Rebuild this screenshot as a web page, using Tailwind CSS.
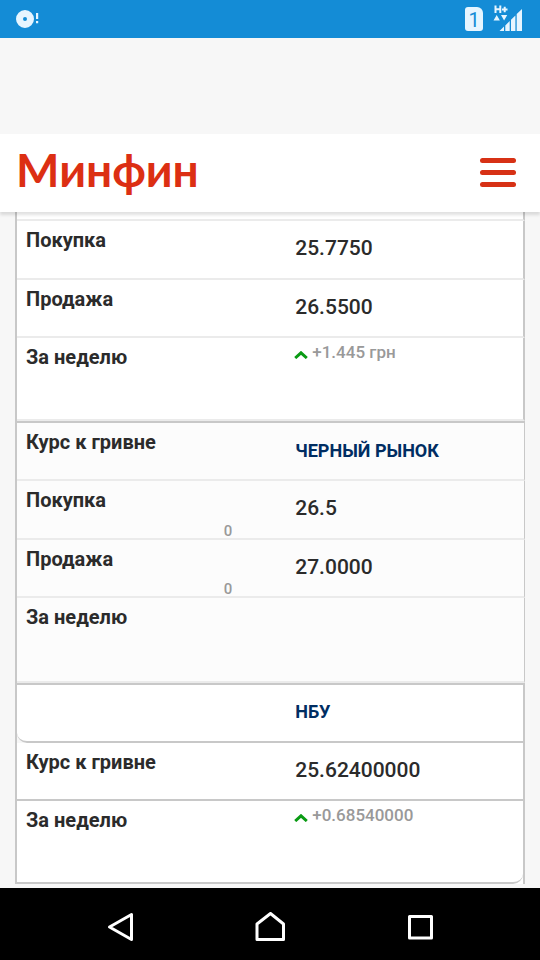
<!DOCTYPE html>
<html lang="ru">

<head>
    <meta charset="UTF-8">
    <meta name="viewport" content="width=device-width, initial-scale=1.0">
    <title>Минфин</title>
    <script src="https://cdn.jsdelivr.net/npm/@tailwindcss/browser@4"></script>
</head>

<body class="flex min-h-screen flex-col bg-[#f7f7f7] font-[Roboto,sans-serif] text-[#2b2b2b]">

    <!-- Status bar -->
    <div class="flex h-[38px] items-center justify-between bg-[#148cd6] px-4">
        <svg class="h-5 w-6" viewBox="0 0 24 20" fill="#e6f5ff" aria-hidden="true">
            <path fill-rule="evenodd" d="M9 1a9 9 0 1 0 0 18A9 9 0 0 0 9 1Zm0 7a2 2 0 1 1 0 4a2 2 0 0 1 0-4Z" />
            <path d="M20 4h2.200v6h-2.200zM20 12h2.200v2.200h-2.200z" />
        </svg>
        <div class="flex items-center gap-[9px]">
            <div class="flex h-6 w-[18px] items-center justify-center rounded-[3px] rounded-tr-md bg-[#e6f5ff] pt-[2px] text-xl leading-6 text-[#148cd6]">1</div>
            <svg class="h-7 w-8" viewBox="0 0 32 28" fill="#e6f5ff" aria-hidden="true">
                <path d="M3.500 .5v7.500M8.300 .5v7.500M3.500 4.200h4.800M10 4.500h5.500M12.700 1.800v5.500" stroke="#e6f5ff" stroke-width="2" fill="none" />
                <path d="M1.500 15.500 4.700 10 7.900 15.500ZM9 10h6.200L12.100 15.500Z" />
                <path d="M7.500 26 12 21.500V26ZM13.300 20.500l4.400-4.400V26h-4.400ZM19 14.800l4.400-4.400V26H19ZM24.700 9 30 4v22h-5.300Z" />
            </svg>
        </div>
    </div>

    <!-- Header -->
    <header class="relative z-10 mt-24 flex h-[78px] items-center justify-between bg-white pr-6 pb-[2px] pl-4 shadow-[0_3px_3px_rgba(0,0,0,0.12)]">
        <a href="#" class="pb-1 font-[Lato,'Open_Sans',sans-serif] text-[46px] leading-[52px] font-bold text-[#dc2f13]">Минфин</a>
        <button type="button" aria-label="Меню" class="flex flex-col gap-[7px]">
            <span class="h-[5px] w-9 rounded-full bg-[#d73115]"></span>
            <span class="h-[5px] w-9 rounded-full bg-[#d73115]"></span>
            <span class="h-[5px] w-9 rounded-full bg-[#d73115]"></span>
        </button>
    </header>

    <!-- Rates -->
    <main class="flex-1 px-[15px] pb-1">
        <table class="w-full table-fixed border-separate border-spacing-0 border-l-2 border-[#c8c8c8] text-left">
            <colgroup>
                <col class="w-[53%]">
                <col>
            </colgroup>
            <tbody class="bg-white">
                <tr class="h-[9px]">
                    <td class="border-b-2 border-[#ebebeb] p-0"></td>
                    <td class="border-r-2 border-b-2 border-r-[#c8c8c8] border-b-[#ebebeb] p-0"></td>
                </tr>
                <tr class="h-[59px] align-top">
                    <th class="border-b-2 border-[#ebebeb] px-[9px] pt-[7px] text-xl leading-6 font-bold">Покупка</th>
                    <td class="border-r-2 border-b-2 border-r-[#c8c8c8] border-b-[#ebebeb] px-[9px] pt-[15px] text-[21px] leading-6 font-medium">25.7750</td>
                </tr>
                <tr class="h-[58px] align-top">
                    <th class="border-b-2 border-[#ebebeb] px-[9px] pt-[7px] text-xl leading-6 font-bold">Продажа</th>
                    <td class="border-r-2 border-b-2 border-r-[#c8c8c8] border-b-[#ebebeb] px-[9px] pt-[15px] text-[21px] leading-6 font-medium">26.5500</td>
                </tr>
                <tr class="h-[83px] align-top">
                    <th class="border-b-2 border-[#ebebeb] px-[9px] pt-[7px] text-xl leading-6 font-bold">За неделю</th>
                    <td class="border-r-2 border-b-2 border-r-[#c8c8c8] border-b-[#ebebeb] px-2 pt-[2px] text-[17px] leading-6 font-medium text-[#999]">
                        <div class="flex items-start gap-1">
                            <svg class="mt-[11px] h-2 w-[14px]" viewBox="0 0 14 8" fill="none" stroke="#0a9b14" stroke-width="3" aria-hidden="true">
                                <path d="M1.200 7 7 1.800 12.800 7" />
                            </svg>
                            +1.445 грн
                        </div>
                    </td>
                </tr>
            </tbody>
            <tbody class="bg-[#fcfcfc]">
                <tr class="h-[60px] align-top">
                    <th class="border-t-2 border-b-2 border-t-[#c8c8c8] border-b-[#ebebeb] px-[9px] pt-[7px] text-xl leading-6 font-bold">Курс к гривне</th>
                    <td class="border-t-2 border-r border-b-2 border-[#c8c8c8] border-b-[#ebebeb] px-[9px] pt-4 text-lg leading-6 font-bold"><a href="#" class="text-[#002d62]">ЧЕРНЫЙ РЫНОК</a></td>
                </tr>
                <tr class="h-[59px] align-top">
                    <th class="border-b-2 border-[#ebebeb] px-[9px] pt-[7px] text-xl leading-6 font-bold">
                        Покупка
                        <div class="mt-3 pr-[45px] text-right text-[15px] leading-[14px] font-medium text-[#999]">0</div>
                    </th>
                    <td class="border-r border-b-2 border-r-[#c8c8c8] border-b-[#ebebeb] px-[9px] pt-[15px] text-[21px] leading-6 font-medium">26.5</td>
                </tr>
                <tr class="h-[58px] align-top">
                    <th class="border-b-2 border-[#ebebeb] px-[9px] pt-[7px] text-xl leading-6 font-bold">
                        Продажа
                        <div class="mt-3 pr-[45px] text-right text-[15px] leading-[13px] font-medium text-[#999]">0</div>
                    </th>
                    <td class="border-r border-b-2 border-r-[#c8c8c8] border-b-[#ebebeb] px-[9px] pt-[15px] text-[21px] leading-6 font-medium">27.0000</td>
                </tr>
                <tr class="h-[85px] align-top">
                    <th class="border-b-2 border-[#ebebeb] px-[9px] pt-[7px] text-xl leading-6 font-bold">За неделю</th>
                    <td class="border-r border-b-2 border-r-[#c8c8c8] border-b-[#ebebeb]"></td>
                </tr>
            </tbody>
            <tbody class="bg-white">
                <tr class="h-[60px] align-top">
                    <td class="rounded-bl-[10px] border-t-2 border-b-2 border-[#c8c8c8]"></td>
                    <td class="border-t-2 border-r-2 border-b-2 border-[#c8c8c8] px-[9px] pt-[15px] text-lg leading-6 font-bold"><a href="#" class="text-[#002d62]">НБУ</a></td>
                </tr>
                <tr class="h-[58px] align-top">
                    <th class="border-b-2 border-[#c8c8c8] px-[9px] pt-[7px] text-xl leading-6 font-bold">Курс к гривне</th>
                    <td class="border-r-2 border-b-2 border-[#c8c8c8] px-[9px] pt-[15px] text-[21px] leading-6 font-medium">25.62400000</td>
                </tr>
                <tr class="h-[83px] align-top">
                    <th class="border-b-2 border-[#c8c8c8] px-[9px] pt-[7px] text-xl leading-6 font-bold">За неделю</th>
                    <td class="border-r-2 border-[#c8c8c8] p-0 text-[17px] leading-6 font-medium text-[#999]">
                        <div class="flex h-[83px] items-start gap-1 rounded-br-[10px] border-b-2 border-[#c8c8c8] px-2 pt-[2px]">
                            <svg class="mt-[11px] h-2 w-[14px]" viewBox="0 0 14 8" fill="none" stroke="#0a9b14" stroke-width="3" aria-hidden="true">
                                <path d="M1.200 7 7 1.800 12.800 7" />
                            </svg>
                            +0.68540000
                        </div>
                    </td>
                </tr>
            </tbody>
        </table>
    </main>

    <!-- Navigation bar -->
    <nav class="grid h-[72px] grid-cols-3 bg-black px-[45px] pt-[7px]">
        <button type="button" aria-label="Назад" class="flex items-center justify-center">
            <svg class="h-8 w-8" viewBox="0 0 32 32" fill="none" stroke="#fff" stroke-width="3" stroke-linejoin="round">
                <path d="M27.500 2.500v25L5.500 15Z" />
            </svg>
        </button>
        <button type="button" aria-label="Домой" class="flex items-center justify-center">
            <svg class="h-8 w-8" viewBox="0 0 32 32" fill="none" stroke="#fff" stroke-width="3" stroke-linejoin="round">
                <path d="M3 27.500V12L16.500 1.500l13 10.500v15.500Z" />
            </svg>
        </button>
        <button type="button" aria-label="Обзор" class="flex items-center justify-center">
            <svg class="h-8 w-8" viewBox="0 0 32 32" fill="none" stroke="#fff" stroke-width="3" stroke-linejoin="round">
                <path d="M5.500 4.500h22v21.500h-22Z" />
            </svg>
        </button>
    </nav>

</body>

</html>
